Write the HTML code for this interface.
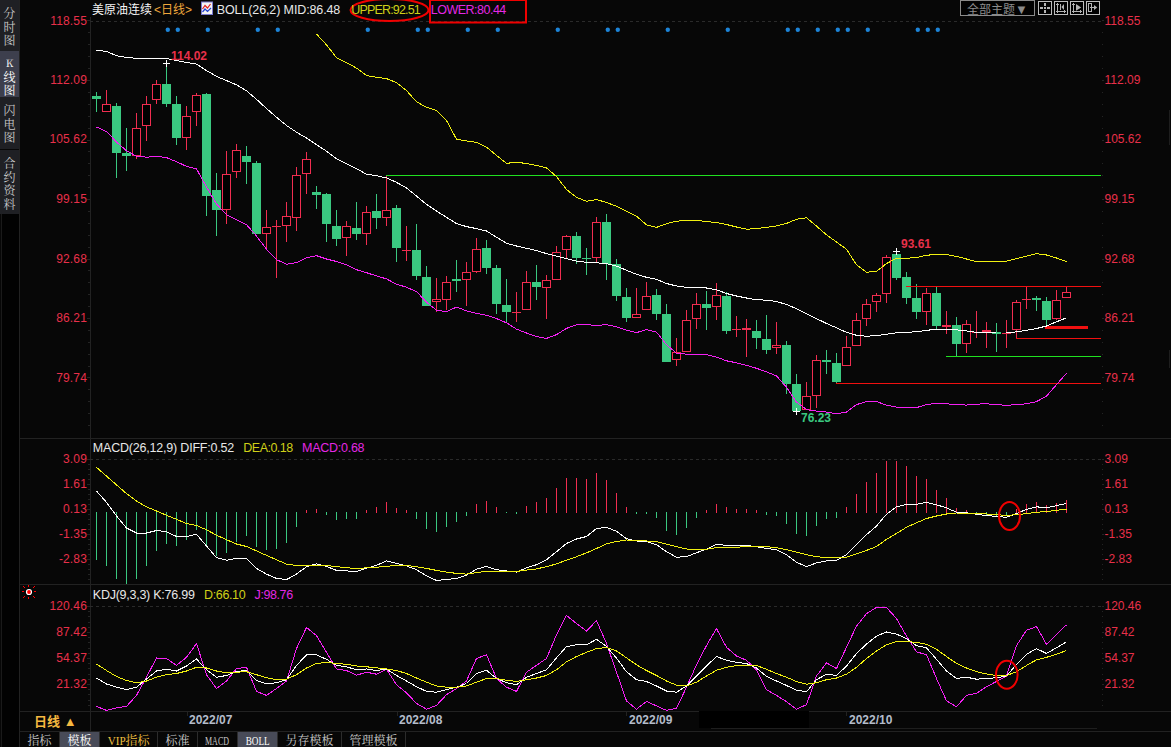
<!DOCTYPE html><html><head><meta charset="utf-8"><title>美原油连续 日线</title><style>
html,body{margin:0;padding:0;background:#070707;}
body{width:1171px;height:747px;position:relative;overflow:hidden;font-family:"Liberation Sans","Noto Sans CJK SC",sans-serif;}
.t{position:absolute;white-space:nowrap;line-height:1;}
.ax{font-size:12px;color:#e8304a;}
.axl{text-align:right;width:60px;left:27px;letter-spacing:0.15px}
.axr{left:1104.5px;}
.ttl{font-size:13px;color:#e8e8e8;letter-spacing:-0.2px}
.song{font-family:"Liberation Mono","Noto Serif CJK SC",serif;font-size:12px;}
.side{position:absolute;left:0;width:19px;text-align:center;color:#c8c8c8;font-size:12px;line-height:13.7px;font-family:"Noto Serif CJK SC",serif;background:#1f2024;}
.tab{position:absolute;top:732px;height:15px;line-height:15px;font-size:12px;color:#c8c8c8;text-align:center;border-right:1px solid #2c2c2c;box-sizing:border-box;font-family:"Noto Serif CJK SC",serif;}
.tab .en{font-family:"Liberation Serif",serif;font-size:12px;display:inline-block;transform-origin:50% 50%;}
.date{font-size:12px;font-weight:bold;color:#b4bccb;top:714px;}
.pk{font-size:12px;font-weight:bold;color:#e8304a;}
</style></head><body>
<svg width="1171" height="747" viewBox="0 0 1171 747" style="position:absolute;left:0;top:0"><g shape-rendering="crispEdges" stroke="#222222" stroke-width="1" fill="none"><path d="M19.5 0V747"/><path d="M90.5 17V731"/><path d="M20 438.5H1171M20 584.5H1171M20 711.5H1171M20 731.5H1171"/><path d="M1.5 214V747" stroke="#1a1a1a"/><rect x="2" y="214" width="17" height="533" fill="#020202" stroke="none"/><path d="M711 728.5H1097" stroke="#1e1e1e"/><path d="M1169.5 110V145M1169.5 350V368" stroke="#1e1e1e"/></g><g shape-rendering="crispEdges" stroke="#2a2a2a" stroke-width="1" stroke-dasharray="3 3" fill="none"><path d="M90 21.5H1101M90 459.5H1101M90 606.5H1101"/></g><path shape-rendering="crispEdges" stroke="#242424" stroke-width="1" d="M87 20.5H90M1102 20.5H1104M88 32.5H90M1102 32.5H1103M88 44.5H90M1102 44.5H1103M88 56.5H90M1102 56.5H1103M88 68.5H90M1102 68.5H1103M87 80.5H90M1102 80.5H1104M88 92.5H90M1102 92.5H1103M88 104.5H90M1102 104.5H1103M88 116.5H90M1102 116.5H1103M88 128.5H90M1102 128.5H1103M87 140.5H90M1102 140.5H1104M88 151.5H90M1102 151.5H1103M88 163.5H90M1102 163.5H1103M88 175.5H90M1102 175.5H1103M88 187.5H90M1102 187.5H1103M87 199.5H90M1102 199.5H1104M88 211.5H90M1102 211.5H1103M88 223.5H90M1102 223.5H1103M88 235.5H90M1102 235.5H1103M88 247.5H90M1102 247.5H1103M87 259.5H90M1102 259.5H1104M88 270.5H90M1102 270.5H1103M88 282.5H90M1102 282.5H1103M88 294.5H90M1102 294.5H1103M88 306.5H90M1102 306.5H1103M87 318.5H90M1102 318.5H1104M88 330.5H90M1102 330.5H1103M88 342.5H90M1102 342.5H1103M88 354.5H90M1102 354.5H1103M88 366.5H90M1102 366.5H1103M87 377.5H90M1102 377.5H1104M88 389.5H90M1102 389.5H1103M88 401.5H90M1102 401.5H1103M88 413.5H90M1102 413.5H1103M88 425.5H90M1102 425.5H1103M87 459.5H90M1102 459.5H1104M88 464.5H90M1102 464.5H1103M88 469.5H90M1102 469.5H1103M88 474.5H90M1102 474.5H1103M88 479.5H90M1102 479.5H1103M87 484.5H90M1102 484.5H1104M88 489.5H90M1102 489.5H1103M88 494.5H90M1102 494.5H1103M88 499.5H90M1102 499.5H1103M88 504.5H90M1102 504.5H1103M87 509.5H90M1102 509.5H1104M88 514.5H90M1102 514.5H1103M88 519.5H90M1102 519.5H1103M88 524.5H90M1102 524.5H1103M88 529.5H90M1102 529.5H1103M87 534.5H90M1102 534.5H1104M88 539.5H90M1102 539.5H1103M88 544.5H90M1102 544.5H1103M88 549.5H90M1102 549.5H1103M88 554.5H90M1102 554.5H1103M87 559.5H90M1102 559.5H1104M88 564.5H90M1102 564.5H1103M88 569.5H90M1102 569.5H1103M88 574.5H90M1102 574.5H1103M88 579.5H90M1102 579.5H1103M87 606.5H90M1102 606.5H1104M88 611.5H90M1102 611.5H1103M88 616.5H90M1102 616.5H1103M88 622.5H90M1102 622.5H1103M88 627.5H90M1102 627.5H1103M87 632.5H90M1102 632.5H1104M88 637.5H90M1102 637.5H1103M88 642.5H90M1102 642.5H1103M88 648.5H90M1102 648.5H1103M88 653.5H90M1102 653.5H1103M87 658.5H90M1102 658.5H1104M88 663.5H90M1102 663.5H1103M88 668.5H90M1102 668.5H1103M88 674.5H90M1102 674.5H1103M88 679.5H90M1102 679.5H1103M87 684.5H90M1102 684.5H1104M88 689.5H90M1102 689.5H1103M88 694.5H90M1102 694.5H1103M88 700.5H90M1102 700.5H1103M88 705.5H90M1102 705.5H1103"/><g shape-rendering="crispEdges"><path stroke="#3ac880" d="M96.5 92V112"/><rect x="92" y="96" width="9" height="3" fill="#3ac880"/><path stroke="#f02d50" d="M106.5 90V104M106.5 112V112"/><rect x="102.5" y="104.5" width="8" height="7" fill="#000" stroke="#f02d50"/><path stroke="#3ac880" d="M116.5 103V178"/><rect x="112" y="106" width="9" height="47" fill="#3ac880"/><path stroke="#3ac880" d="M126.5 128V171"/><rect x="122" y="153" width="9" height="3" fill="#3ac880"/><path stroke="#f02d50" d="M136.5 113V128M136.5 156V159"/><rect x="132.5" y="128.5" width="8" height="27" fill="#000" stroke="#f02d50"/><path stroke="#f02d50" d="M146.5 96V104M146.5 126V141"/><rect x="142.5" y="104.5" width="8" height="21" fill="#000" stroke="#f02d50"/><path stroke="#f02d50" d="M156.5 80V84M156.5 100V104"/><rect x="152.5" y="84.5" width="8" height="15" fill="#000" stroke="#f02d50"/><path stroke="#3ac880" d="M166.5 64V107"/><rect x="162" y="84" width="9" height="20" fill="#3ac880"/><path stroke="#3ac880" d="M176.5 96V145"/><rect x="172" y="104" width="9" height="34" fill="#3ac880"/><path stroke="#f02d50" d="M186.5 106V116M186.5 138V150"/><rect x="182.5" y="116.5" width="8" height="21" fill="#000" stroke="#f02d50"/><path stroke="#f02d50" d="M196.5 93V95M196.5 112V126"/><rect x="192.5" y="95.5" width="8" height="16" fill="#000" stroke="#f02d50"/><path stroke="#3ac880" d="M206.5 93V216"/><rect x="202" y="94" width="9" height="102" fill="#3ac880"/><path stroke="#3ac880" d="M216.5 173V236"/><rect x="212" y="190" width="9" height="20" fill="#3ac880"/><path stroke="#f02d50" d="M226.5 151V174M226.5 210V224"/><rect x="222.5" y="174.5" width="8" height="35" fill="#000" stroke="#f02d50"/><path stroke="#f02d50" d="M236.5 144V150M236.5 172V178"/><rect x="232.5" y="150.5" width="8" height="21" fill="#000" stroke="#f02d50"/><path stroke="#3ac880" d="M246.5 146V184"/><rect x="242" y="156" width="9" height="6" fill="#3ac880"/><path stroke="#3ac880" d="M256.5 161V234"/><rect x="252" y="163" width="9" height="71" fill="#3ac880"/><path stroke="#f02d50" d="M266.5 210V227M266.5 234V250"/><rect x="262.5" y="227.5" width="8" height="6" fill="#000" stroke="#f02d50"/><path stroke="#f02d50" d="M276.5 220V278"/><rect x="272" y="226" width="9" height="1" fill="#f02d50"/><path stroke="#f02d50" d="M286.5 202V216M286.5 226V242"/><rect x="282.5" y="216.5" width="8" height="9" fill="#000" stroke="#f02d50"/><path stroke="#f02d50" d="M296.5 167V175M296.5 218V231"/><rect x="292.5" y="175.5" width="8" height="42" fill="#000" stroke="#f02d50"/><path stroke="#f02d50" d="M306.5 152V159M306.5 174V194"/><rect x="302.5" y="159.5" width="8" height="14" fill="#000" stroke="#f02d50"/><path stroke="#3ac880" d="M316.5 186V209"/><rect x="312" y="192" width="9" height="3" fill="#3ac880"/><path stroke="#3ac880" d="M326.5 193V242"/><rect x="322" y="194" width="9" height="30" fill="#3ac880"/><path stroke="#3ac880" d="M336.5 210V246"/><rect x="332" y="226" width="9" height="13" fill="#3ac880"/><path stroke="#f02d50" d="M346.5 221V226M346.5 238V256"/><rect x="342.5" y="226.5" width="8" height="11" fill="#000" stroke="#f02d50"/><path stroke="#3ac880" d="M356.5 202V240"/><rect x="352" y="228" width="9" height="6" fill="#3ac880"/><path stroke="#f02d50" d="M366.5 206V212M366.5 234V245"/><rect x="362.5" y="212.5" width="8" height="21" fill="#000" stroke="#f02d50"/><path stroke="#3ac880" d="M376.5 194V229"/><rect x="372" y="211" width="9" height="7" fill="#3ac880"/><path stroke="#f02d50" d="M386.5 176V210M386.5 218V226"/><rect x="382.5" y="210.5" width="8" height="7" fill="#000" stroke="#f02d50"/><path stroke="#3ac880" d="M396.5 205V262"/><rect x="392" y="208" width="9" height="40" fill="#3ac880"/><path stroke="#f02d50" d="M406.5 226V261"/><rect x="402" y="250" width="9" height="1" fill="#f02d50"/><path stroke="#3ac880" d="M416.5 224V280"/><rect x="412" y="250" width="9" height="26" fill="#3ac880"/><path stroke="#3ac880" d="M426.5 266V306"/><rect x="422" y="277" width="9" height="29" fill="#3ac880"/><path stroke="#f02d50" d="M436.5 278V299M436.5 302V312"/><rect x="432.5" y="299.5" width="8" height="2" fill="#000" stroke="#f02d50"/><path stroke="#f02d50" d="M446.5 276V282M446.5 300V310"/><rect x="442.5" y="282.5" width="8" height="17" fill="#000" stroke="#f02d50"/><path stroke="#3ac880" d="M456.5 260V292"/><rect x="452" y="279" width="9" height="2" fill="#3ac880"/><path stroke="#f02d50" d="M466.5 262V272M466.5 280V306"/><rect x="462.5" y="272.5" width="8" height="7" fill="#000" stroke="#f02d50"/><path stroke="#f02d50" d="M476.5 238V249M476.5 272V273"/><rect x="472.5" y="249.5" width="8" height="22" fill="#000" stroke="#f02d50"/><path stroke="#3ac880" d="M486.5 240V274"/><rect x="482" y="248" width="9" height="20" fill="#3ac880"/><path stroke="#3ac880" d="M496.5 265V314"/><rect x="492" y="268" width="9" height="36" fill="#3ac880"/><path stroke="#3ac880" d="M506.5 279V322"/><rect x="502" y="305" width="9" height="7" fill="#3ac880"/><path stroke="#f02d50" d="M516.5 292V322"/><rect x="512" y="312" width="9" height="1" fill="#f02d50"/><path stroke="#f02d50" d="M526.5 271V282M526.5 310V310"/><rect x="522.5" y="282.5" width="8" height="27" fill="#000" stroke="#f02d50"/><path stroke="#3ac880" d="M536.5 265V300"/><rect x="532" y="282" width="9" height="5" fill="#3ac880"/><path stroke="#f02d50" d="M546.5 275V280M546.5 288V319"/><rect x="542.5" y="280.5" width="8" height="7" fill="#000" stroke="#f02d50"/><path stroke="#f02d50" d="M556.5 246V252M556.5 280V280"/><rect x="552.5" y="252.5" width="8" height="27" fill="#000" stroke="#f02d50"/><path stroke="#f02d50" d="M566.5 235V236M566.5 250V258"/><rect x="562.5" y="236.5" width="8" height="13" fill="#000" stroke="#f02d50"/><path stroke="#3ac880" d="M576.5 232V264"/><rect x="572" y="236" width="9" height="22" fill="#3ac880"/><path stroke="#3ac880" d="M586.5 248V275"/><rect x="582" y="258" width="9" height="1" fill="#3ac880"/><path stroke="#f02d50" d="M596.5 217V222M596.5 258V262"/><rect x="592.5" y="222.5" width="8" height="35" fill="#000" stroke="#f02d50"/><path stroke="#3ac880" d="M606.5 214V280"/><rect x="602" y="222" width="9" height="42" fill="#3ac880"/><path stroke="#3ac880" d="M616.5 259V301"/><rect x="612" y="264" width="9" height="32" fill="#3ac880"/><path stroke="#3ac880" d="M626.5 288V322"/><rect x="622" y="297" width="9" height="21" fill="#3ac880"/><path stroke="#f02d50" d="M636.5 288V314M636.5 318V318"/><rect x="632.5" y="314.5" width="8" height="3" fill="#000" stroke="#f02d50"/><path stroke="#f02d50" d="M646.5 282V296M646.5 310V310"/><rect x="642.5" y="296.5" width="8" height="13" fill="#000" stroke="#f02d50"/><path stroke="#3ac880" d="M656.5 289V320"/><rect x="652" y="295" width="9" height="19" fill="#3ac880"/><path stroke="#3ac880" d="M666.5 304V362"/><rect x="662" y="314" width="9" height="48" fill="#3ac880"/><path stroke="#f02d50" d="M676.5 338V352M676.5 360V366"/><rect x="672.5" y="352.5" width="8" height="7" fill="#000" stroke="#f02d50"/><path stroke="#f02d50" d="M686.5 310V320M686.5 352V352"/><rect x="682.5" y="320.5" width="8" height="31" fill="#000" stroke="#f02d50"/><path stroke="#f02d50" d="M696.5 293V304M696.5 319V329"/><rect x="692.5" y="304.5" width="8" height="14" fill="#000" stroke="#f02d50"/><path stroke="#3ac880" d="M706.5 291V330"/><rect x="702" y="304" width="9" height="4" fill="#3ac880"/><path stroke="#f02d50" d="M716.5 283V295M716.5 307V320"/><rect x="712.5" y="295.5" width="8" height="11" fill="#000" stroke="#f02d50"/><path stroke="#3ac880" d="M726.5 292V334"/><rect x="722" y="296" width="9" height="35" fill="#3ac880"/><path stroke="#f02d50" d="M736.5 316V337"/><rect x="732" y="329" width="9" height="1" fill="#f02d50"/><path stroke="#f02d50" d="M746.5 319V357"/><rect x="742" y="328" width="9" height="2" fill="#f02d50"/><path stroke="#3ac880" d="M756.5 320V349"/><rect x="752" y="331" width="9" height="7" fill="#3ac880"/><path stroke="#3ac880" d="M766.5 315V354"/><rect x="762" y="339" width="9" height="11" fill="#3ac880"/><path stroke="#f02d50" d="M776.5 322V345M776.5 348V354"/><rect x="772.5" y="345.5" width="8" height="2" fill="#000" stroke="#f02d50"/><path stroke="#3ac880" d="M786.5 341V394"/><rect x="782" y="345" width="9" height="39" fill="#3ac880"/><path stroke="#3ac880" d="M796.5 374V412"/><rect x="792" y="384" width="9" height="27" fill="#3ac880"/><path stroke="#f02d50" d="M806.5 382V396M806.5 410V410"/><rect x="802.5" y="396.5" width="8" height="13" fill="#000" stroke="#f02d50"/><path stroke="#f02d50" d="M816.5 355V360M816.5 396V408"/><rect x="812.5" y="360.5" width="8" height="35" fill="#000" stroke="#f02d50"/><path stroke="#3ac880" d="M826.5 350V374"/><rect x="822" y="360" width="9" height="2" fill="#3ac880"/><path stroke="#3ac880" d="M836.5 353V384"/><rect x="832" y="363" width="9" height="19" fill="#3ac880"/><path stroke="#f02d50" d="M846.5 336V347M846.5 366V366"/><rect x="842.5" y="347.5" width="8" height="18" fill="#000" stroke="#f02d50"/><path stroke="#f02d50" d="M856.5 313V320M856.5 346V346"/><rect x="852.5" y="320.5" width="8" height="25" fill="#000" stroke="#f02d50"/><path stroke="#f02d50" d="M866.5 299V304M866.5 319V326"/><rect x="862.5" y="304.5" width="8" height="14" fill="#000" stroke="#f02d50"/><path stroke="#f02d50" d="M876.5 293V295M876.5 302V312"/><rect x="872.5" y="295.5" width="8" height="6" fill="#000" stroke="#f02d50"/><path stroke="#f02d50" d="M886.5 255V257M886.5 294V303"/><rect x="882.5" y="257.5" width="8" height="36" fill="#000" stroke="#f02d50"/><path stroke="#3ac880" d="M896.5 251V280"/><rect x="892" y="254" width="9" height="24" fill="#3ac880"/><path stroke="#3ac880" d="M906.5 272V304"/><rect x="902" y="277" width="9" height="21" fill="#3ac880"/><path stroke="#3ac880" d="M916.5 284V319"/><rect x="912" y="298" width="9" height="14" fill="#3ac880"/><path stroke="#f02d50" d="M926.5 288V293M926.5 312V325"/><rect x="922.5" y="293.5" width="8" height="18" fill="#000" stroke="#f02d50"/><path stroke="#3ac880" d="M936.5 286V330"/><rect x="932" y="293" width="9" height="33" fill="#3ac880"/><path stroke="#f02d50" d="M946.5 311V334"/><rect x="942" y="325" width="9" height="2" fill="#f02d50"/><path stroke="#3ac880" d="M956.5 317V356"/><rect x="952" y="325" width="9" height="19" fill="#3ac880"/><path stroke="#f02d50" d="M966.5 320V324M966.5 344V353"/><rect x="962.5" y="324.5" width="8" height="19" fill="#000" stroke="#f02d50"/><path stroke="#f02d50" d="M976.5 311V338"/><rect x="972" y="332" width="9" height="1" fill="#f02d50"/><path stroke="#f02d50" d="M986.5 322V348"/><rect x="982" y="330" width="9" height="2" fill="#f02d50"/><path stroke="#3ac880" d="M996.5 323V352"/><rect x="992" y="332" width="9" height="2" fill="#3ac880"/><path stroke="#f02d50" d="M1006.5 320V348"/><rect x="1002" y="333" width="9" height="1" fill="#f02d50"/><path stroke="#f02d50" d="M1016.5 300V302M1016.5 330V338"/><rect x="1012.5" y="302.5" width="8" height="27" fill="#000" stroke="#f02d50"/><path stroke="#f02d50" d="M1026.5 287V309"/><rect x="1022" y="299" width="9" height="1" fill="#f02d50"/><path stroke="#3ac880" d="M1036.5 296V311"/><rect x="1032" y="298" width="9" height="2" fill="#3ac880"/><path stroke="#3ac880" d="M1046.5 297V325"/><rect x="1042" y="301" width="9" height="19" fill="#3ac880"/><path stroke="#f02d50" d="M1056.5 290V300M1056.5 319V320"/><rect x="1052.5" y="300.5" width="8" height="18" fill="#000" stroke="#f02d50"/><path stroke="#f02d50" d="M1066.5 286V292M1066.5 298V298"/><rect x="1062.5" y="292.5" width="8" height="5" fill="#000" stroke="#f02d50"/></g><g shape-rendering="crispEdges" fill="none"><path stroke="#20e020" stroke-width="1" d="M386 175.5H1101M946 356.5H1101"/><path stroke="#f01010" stroke-width="1" d="M906 286.5H1101M836 383.5H1101M1016 338.5H1101"/></g><path shape-rendering="crispEdges" stroke="#f01010" stroke-width="3" d="M1045 327.5H1088"/><polyline shape-rendering="crispEdges" fill="none" stroke="#f0f010" stroke-width="1" points="316.5,34 326.5,44.9 336.5,57.6 346.5,62.6 356.5,68.1 366.5,75.6 376.5,77.3 386.5,78.6 396.5,82.6 406.5,90.6 416.5,101.8 426.5,107.3 436.5,110.5 446.5,120.5 456.5,139.2 466.5,140.9 476.5,142.4 486.5,147.2 496.5,155.4 506.5,163.4 516.5,162.1 526.5,163.6 536.5,165.4 546.5,167.9 556.5,176.6 566.5,189.5 576.5,197.4 586.5,201.3 596.5,199.5 606.5,202.5 616.5,206.2 626.5,211.2 636.5,216.2 646.5,224.9 656.5,227.4 666.5,223.7 676.5,221.2 686.5,220.4 696.5,220.4 706.5,221.5 716.5,222.6 726.5,224.5 736.5,227 746.5,229.2 756.5,228.6 766.5,227.3 776.5,225.9 786.5,223.4 796.5,219.3 806.5,217.8 816.5,226.1 826.5,234.8 836.5,242 846.5,249.3 856.5,264.8 866.5,272.3 876.5,271.3 886.5,263.6 896.5,258.3 906.5,258.2 916.5,257.6 926.5,255.3 936.5,254.3 946.5,254.6 956.5,256.4 966.5,259 976.5,261.6 986.5,261.7 996.5,261.7 1006.5,261.2 1016.5,258.7 1026.5,256.2 1036.5,253.7 1046.5,255 1056.5,258 1066.5,261.7"/><polyline shape-rendering="crispEdges" fill="none" stroke="#ffffff" stroke-width="1" points="96.5,50.2 106.5,51.4 116.5,55.7 126.5,57.4 136.5,58.4 146.5,58.4 156.5,58.4 166.5,58.6 176.5,60.6 186.5,62.4 196.5,64.1 206.5,70.6 216.5,76.4 226.5,80.6 236.5,84.8 246.5,90.8 256.5,99.3 266.5,108.5 276.5,117.2 286.5,125.5 296.5,132.2 306.5,138 316.5,144.7 326.5,151.2 336.5,158.7 346.5,163.7 356.5,168.7 366.5,174.2 376.5,175.7 386.5,177.9 396.5,182.4 406.5,187.9 416.5,196.1 426.5,204.4 436.5,211.1 446.5,217.3 456.5,223.6 466.5,226.6 476.5,228.6 486.5,231 496.5,237.3 506.5,243.2 516.5,246 526.5,248.3 536.5,250.6 546.5,253.6 556.5,256.1 566.5,258.6 576.5,261.1 586.5,262.3 596.5,262.8 606.5,263.6 616.5,266.1 626.5,270.3 636.5,274.3 646.5,277.3 656.5,279.3 666.5,283.5 676.5,286 686.5,287.3 696.5,287.8 706.5,288 716.5,289.8 726.5,293.5 736.5,296 746.5,298 756.5,299.7 766.5,300.2 776.5,301.5 786.5,304.5 796.5,308.6 806.5,313.6 816.5,318.6 826.5,323.5 836.5,327.8 846.5,332.3 856.5,335.3 866.5,336.3 876.5,335.5 886.5,334.3 896.5,332.8 906.5,332.3 916.5,331.8 926.5,330.3 936.5,329.3 946.5,329.3 956.5,329.8 966.5,331 976.5,332.3 986.5,332.8 996.5,333 1006.5,333 1016.5,331.8 1026.5,330.3 1036.5,328.5 1046.5,326 1056.5,321.8 1066.5,317.8"/><polyline shape-rendering="crispEdges" fill="none" stroke="#f420f4" stroke-width="1" points="96.5,127 106.5,131.5 116.5,142 126.5,150.7 136.5,156.2 146.5,157.2 156.5,156.3 166.5,157.6 176.5,161.7 186.5,166.4 196.5,168.8 206.5,187 216.5,204 226.5,214.6 236.5,219.6 246.5,224.6 256.5,236 266.5,249.3 276.5,259.7 286.5,264.2 296.5,262.7 306.5,257.7 316.5,255.7 326.5,259 336.5,261.5 346.5,264.7 356.5,269.7 366.5,272.7 376.5,275.9 386.5,278.9 396.5,284.2 406.5,287.2 416.5,291.6 426.5,302.1 436.5,310.3 446.5,311.6 456.5,307.1 466.5,310.8 476.5,313.3 486.5,315.3 496.5,318.6 506.5,322.8 516.5,329.1 526.5,333 536.5,336.6 546.5,338.4 556.5,334.6 566.5,328.4 576.5,324.7 586.5,324.7 596.5,325.4 606.5,324.7 616.5,326.7 626.5,330.1 636.5,332.6 646.5,329.7 656.5,332.1 666.5,344.6 676.5,353.3 686.5,354.1 696.5,354.6 706.5,354.6 716.5,357.1 726.5,360.8 736.5,362.8 746.5,365.3 756.5,368.3 766.5,371.8 776.5,376 786.5,387.1 796.5,402.1 806.5,409.6 816.5,411.1 826.5,412.1 836.5,413.8 846.5,412.1 856.5,404.6 866.5,401.6 876.5,401.6 886.5,405.1 896.5,407.1 906.5,407.6 916.5,407.6 926.5,404.6 936.5,403.3 946.5,403.8 956.5,404.6 966.5,405.1 976.5,404.1 986.5,403.8 996.5,404.6 1006.5,405.3 1016.5,404.6 1026.5,403.8 1036.5,401.6 1046.5,396.2 1056.5,384.6 1066.5,373.4"/><g fill="#1c84d8"><circle cx="167.8" cy="29.8" r="2.2"/><circle cx="177.8" cy="29.8" r="2.2"/><circle cx="207.8" cy="29.8" r="2.2"/><circle cx="257.8" cy="29.8" r="2.2"/><circle cx="277.8" cy="29.8" r="2.2"/><circle cx="367.8" cy="29.8" r="2.2"/><circle cx="417.8" cy="29.8" r="2.2"/><circle cx="427.8" cy="29.8" r="2.2"/><circle cx="467.8" cy="29.8" r="2.2"/><circle cx="497.8" cy="29.8" r="2.2"/><circle cx="557.8" cy="29.8" r="2.2"/><circle cx="607.8" cy="29.8" r="2.2"/><circle cx="617.8" cy="29.8" r="2.2"/><circle cx="667.8" cy="29.8" r="2.2"/><circle cx="727.8" cy="29.8" r="2.2"/><circle cx="787.8" cy="29.8" r="2.2"/><circle cx="797.8" cy="29.8" r="2.2"/><circle cx="817.8" cy="29.8" r="2.2"/><circle cx="837.8" cy="29.8" r="2.2"/><circle cx="847.8" cy="29.8" r="2.2"/><circle cx="867.8" cy="29.8" r="2.2"/><circle cx="917.8" cy="29.8" r="2.2"/><circle cx="927.8" cy="29.8" r="2.2"/><circle cx="937.8" cy="29.8" r="2.2"/></g><path shape-rendering="crispEdges" stroke="#fff" d="M163 63.5H170M166.5 60V67M893 251.5H900M896.5 248V255M793 411.5H800M796.5 408V415"/><g shape-rendering="crispEdges"><path stroke="#3ac880" d="M96.5 512V560"/><path stroke="#3ac880" d="M106.5 512V566"/><path stroke="#3ac880" d="M116.5 512V579"/><path stroke="#3ac880" d="M126.5 512V584"/><path stroke="#3ac880" d="M136.5 512V579"/><path stroke="#3ac880" d="M146.5 512V566"/><path stroke="#3ac880" d="M156.5 512V551"/><path stroke="#3ac880" d="M166.5 512V544"/><path stroke="#3ac880" d="M176.5 512V546"/><path stroke="#3ac880" d="M186.5 512V540"/><path stroke="#3ac880" d="M196.5 512V530"/><path stroke="#3ac880" d="M206.5 512V546"/><path stroke="#3ac880" d="M216.5 512V556"/><path stroke="#3ac880" d="M226.5 512V553"/><path stroke="#3ac880" d="M236.5 512V542"/><path stroke="#3ac880" d="M246.5 512V536"/><path stroke="#3ac880" d="M256.5 512V547"/><path stroke="#3ac880" d="M266.5 512V550"/><path stroke="#3ac880" d="M276.5 512V549"/><path stroke="#3ac880" d="M286.5 512V543"/><path stroke="#3ac880" d="M296.5 512V527"/><path stroke="#f02d50" d="M306.5 510V513"/><path stroke="#f02d50" d="M316.5 509V513"/><path stroke="#3ac880" d="M326.5 512V515"/><path stroke="#3ac880" d="M336.5 512V520"/><path stroke="#3ac880" d="M346.5 512V519"/><path stroke="#3ac880" d="M356.5 512V519"/><path stroke="#f02d50" d="M366.5 510V513"/><path stroke="#f02d50" d="M376.5 507V513"/><path stroke="#f02d50" d="M386.5 502V513"/><path stroke="#f02d50" d="M396.5 508V513"/><path stroke="#f02d50" d="M406.5 510V513"/><path stroke="#3ac880" d="M416.5 512V519"/><path stroke="#3ac880" d="M426.5 512V529"/><path stroke="#3ac880" d="M436.5 512V532"/><path stroke="#3ac880" d="M446.5 512V527"/><path stroke="#3ac880" d="M456.5 512V522"/><path stroke="#3ac880" d="M466.5 512V516"/><path stroke="#f02d50" d="M476.5 504V513"/><path stroke="#f02d50" d="M486.5 501V513"/><path stroke="#f02d50" d="M496.5 507V513"/><path stroke="#3ac880" d="M506.5 512V513"/><path stroke="#3ac880" d="M516.5 512V514"/><path stroke="#f02d50" d="M526.5 506V513"/><path stroke="#f02d50" d="M536.5 502V513"/><path stroke="#f02d50" d="M546.5 498V513"/><path stroke="#f02d50" d="M556.5 488V513"/><path stroke="#f02d50" d="M566.5 478V513"/><path stroke="#f02d50" d="M576.5 478V513"/><path stroke="#f02d50" d="M586.5 479V513"/><path stroke="#f02d50" d="M596.5 473V513"/><path stroke="#f02d50" d="M606.5 480V513"/><path stroke="#f02d50" d="M616.5 493V513"/><path stroke="#f02d50" d="M626.5 507V513"/><path stroke="#3ac880" d="M636.5 512V514"/><path stroke="#3ac880" d="M646.5 512V514"/><path stroke="#3ac880" d="M656.5 512V518"/><path stroke="#3ac880" d="M666.5 512V531"/><path stroke="#3ac880" d="M676.5 512V535"/><path stroke="#3ac880" d="M686.5 512V528"/><path stroke="#3ac880" d="M696.5 512V518"/><path stroke="#f02d50" d="M706.5 510V513"/><path stroke="#f02d50" d="M716.5 504V513"/><path stroke="#f02d50" d="M726.5 507V513"/><path stroke="#f02d50" d="M736.5 509V513"/><path stroke="#f02d50" d="M746.5 509V513"/><path stroke="#f02d50" d="M756.5 510V513"/><path stroke="#3ac880" d="M766.5 512V515"/><path stroke="#3ac880" d="M776.5 512V516"/><path stroke="#3ac880" d="M786.5 512V524"/><path stroke="#3ac880" d="M796.5 512V534"/><path stroke="#3ac880" d="M806.5 512V536"/><path stroke="#3ac880" d="M816.5 512V526"/><path stroke="#3ac880" d="M826.5 512V519"/><path stroke="#3ac880" d="M836.5 512V518"/><path stroke="#f02d50" d="M846.5 507V513"/><path stroke="#f02d50" d="M856.5 494V513"/><path stroke="#f02d50" d="M866.5 482V513"/><path stroke="#f02d50" d="M876.5 473V513"/><path stroke="#f02d50" d="M886.5 461V513"/><path stroke="#f02d50" d="M896.5 461V513"/><path stroke="#f02d50" d="M906.5 466V513"/><path stroke="#f02d50" d="M916.5 476V513"/><path stroke="#f02d50" d="M926.5 479V513"/><path stroke="#f02d50" d="M936.5 490V513"/><path stroke="#f02d50" d="M946.5 498V513"/><path stroke="#f02d50" d="M956.5 508V513"/><path stroke="#f02d50" d="M966.5 510V513"/><path stroke="#3ac880" d="M976.5 512V514"/><path stroke="#3ac880" d="M986.5 512V515"/><path stroke="#3ac880" d="M996.5 512V516"/><path stroke="#3ac880" d="M1006.5 512V516"/><path stroke="#f02d50" d="M1016.5 509V513"/><path stroke="#f02d50" d="M1026.5 504V513"/><path stroke="#f02d50" d="M1036.5 502V513"/><path stroke="#f02d50" d="M1046.5 505V513"/><path stroke="#f02d50" d="M1056.5 503V513"/><path stroke="#f02d50" d="M1066.5 500V513"/></g><polyline shape-rendering="crispEdges" fill="none" stroke="#ffffff" stroke-width="1" points="96.5,491.1 106.5,502.3 116.5,516 126.5,528 136.5,533 146.5,533 156.5,530.5 166.5,531.7 176.5,536.5 186.5,536.5 196.5,534.2 206.5,546 216.5,557.7 226.5,560.2 236.5,558.4 246.5,558.4 256.5,568.4 266.5,574.1 276.5,578.4 286.5,579.6 296.5,574.1 306.5,566.7 316.5,563.9 326.5,566.4 336.5,570.4 346.5,570.9 356.5,571.6 366.5,568.2 376.5,565.4 386.5,560.9 396.5,563.4 406.5,565.9 416.5,569.7 426.5,575.9 436.5,580.4 446.5,579.6 456.5,578.4 466.5,575.1 476.5,569.2 486.5,566.4 496.5,569.7 506.5,570.9 516.5,572.1 526.5,567.9 536.5,564.7 546.5,559.7 556.5,551.7 566.5,543.5 576.5,539 586.5,536.5 596.5,528.5 606.5,527.3 616.5,531.3 626.5,538.7 636.5,541 646.5,541.5 656.5,544.7 666.5,551.7 676.5,557.2 686.5,556.7 696.5,552.7 706.5,549.2 716.5,544.2 726.5,545.5 736.5,545.5 746.5,545.5 756.5,546.7 766.5,548.5 776.5,549.7 786.5,554.7 796.5,562.2 806.5,566.7 816.5,562.9 826.5,560.9 836.5,560.4 846.5,554.7 856.5,544.7 866.5,534.7 876.5,526 886.5,514.2 896.5,506.8 906.5,504.3 916.5,504.3 926.5,502.3 936.5,504.8 946.5,507.8 956.5,512.3 966.5,512.8 976.5,514.3 986.5,515.5 996.5,516.5 1006.5,517.3 1016.5,513.5 1026.5,509.3 1036.5,506.8 1046.5,507.8 1056.5,505.6 1066.5,503.6"/><polyline shape-rendering="crispEdges" fill="none" stroke="#f0f010" stroke-width="1" points="96.5,467.4 106.5,476.1 116.5,484.9 126.5,493.6 136.5,501.1 146.5,506.8 156.5,511 166.5,515.3 176.5,519.3 186.5,523.5 196.5,525.5 206.5,529.8 216.5,535.2 226.5,539.7 236.5,544 246.5,546.5 256.5,550.9 266.5,555.4 276.5,559.7 286.5,564.2 296.5,565.4 306.5,565.7 316.5,565.2 326.5,565.4 336.5,566.7 346.5,567.7 356.5,568.5 366.5,567.8 376.5,567.2 386.5,566.4 396.5,565.4 406.5,565.4 416.5,566.7 426.5,568.4 436.5,570.4 446.5,572.1 456.5,573.4 466.5,574.1 476.5,572.6 486.5,571.4 496.5,571.4 506.5,571.4 516.5,571.4 526.5,570.1 536.5,568.9 546.5,566.7 556.5,563.9 566.5,560.2 576.5,556.7 586.5,552.9 596.5,548.5 606.5,543.8 616.5,541.5 626.5,540 636.5,540.5 646.5,541 656.5,541.7 666.5,544.2 676.5,546.7 686.5,549 696.5,549.7 706.5,549.2 716.5,547.7 726.5,547.2 736.5,547.2 746.5,546.7 756.5,546.5 766.5,546.7 776.5,547.7 786.5,549.7 796.5,552.2 806.5,554.7 816.5,556.7 826.5,557.7 836.5,557.7 846.5,557.2 856.5,553.9 866.5,550.4 876.5,546.5 886.5,539.4 896.5,533.5 906.5,527.3 916.5,522.8 926.5,518.5 936.5,516 946.5,514 956.5,513 966.5,513 976.5,513.5 986.5,514 996.5,514.8 1006.5,515.3 1016.5,514.8 1026.5,513.5 1036.5,512.3 1046.5,511.5 1056.5,510.3 1066.5,509.1"/><polyline shape-rendering="crispEdges" fill="none" stroke="#f420f4" stroke-width="1" points="96.5,706.4 106.5,710.4 116.5,707.9 126.5,706.4 136.5,695.4 146.5,677.2 156.5,658 166.5,658.5 176.5,665.3 186.5,657.3 196.5,643.6 206.5,674.7 216.5,688.5 226.5,681 236.5,668.5 246.5,667.3 256.5,691.4 266.5,695.4 276.5,688.5 286.5,681 296.5,648.6 306.5,627.4 316.5,635.6 326.5,652.3 336.5,669 346.5,670.5 356.5,675.2 366.5,672.2 376.5,674.2 386.5,669.3 396.5,684.7 406.5,692.9 416.5,703.4 426.5,709.2 436.5,705.4 446.5,694.7 456.5,688.5 466.5,681 476.5,658.5 486.5,654.8 496.5,678.5 506.5,687.2 516.5,691.4 526.5,672.2 536.5,665.3 546.5,658.5 556.5,634.8 566.5,615.4 576.5,623.6 586.5,631.1 596.5,620.6 606.5,643.5 616.5,672.2 626.5,700.9 636.5,709.2 646.5,701.4 656.5,705.9 666.5,710.4 676.5,708.4 686.5,687.2 696.5,664.8 706.5,645.6 716.5,628.6 726.5,647.3 736.5,656 746.5,660.3 756.5,669.8 766.5,689.7 776.5,695.4 786.5,701.7 796.5,709.2 806.5,704.7 816.5,676 826.5,662.8 836.5,668.5 846.5,647.3 856.5,626.1 866.5,613.6 876.5,607.4 886.5,607.4 896.5,618.6 906.5,636.1 916.5,651.8 926.5,654.8 936.5,678.5 946.5,700.9 956.5,706.7 966.5,695.4 976.5,693.4 986.5,686.7 996.5,681.5 1006.5,676 1016.5,645.6 1026.5,630.3 1036.5,626.6 1046.5,644.3 1056.5,634.3 1066.5,624.9"/><polyline shape-rendering="crispEdges" fill="none" stroke="#ffffff" stroke-width="1" points="96.5,678 106.5,684 116.5,687.2 126.5,689.7 136.5,687.2 146.5,679 156.5,671 166.5,669.3 176.5,671 186.5,666 196.5,659 206.5,669.8 216.5,677.2 226.5,675.5 236.5,671.5 246.5,670.5 256.5,680.5 266.5,684 276.5,682.7 286.5,679.7 296.5,665.5 306.5,654.8 316.5,654.8 326.5,659.3 336.5,665.3 346.5,666.8 356.5,669.8 366.5,669 376.5,670.5 386.5,669 396.5,675.5 406.5,681 416.5,686.7 426.5,691.4 436.5,692.2 446.5,689.7 456.5,687.2 466.5,683.5 476.5,673.5 486.5,670.2 496.5,678.5 506.5,682.7 516.5,684.7 526.5,677.2 536.5,673.5 546.5,669.8 556.5,657.8 566.5,646.6 576.5,644.8 586.5,644.8 596.5,639.3 606.5,646.4 616.5,658.2 626.5,671.7 636.5,679.7 646.5,681.5 656.5,686 666.5,691 676.5,692.2 686.5,686 696.5,676 706.5,666 716.5,656.5 726.5,660.3 736.5,662.3 746.5,663.5 756.5,668 766.5,676.5 776.5,681 786.5,685.5 796.5,690.2 806.5,691.7 816.5,679.7 826.5,674.2 836.5,675.5 846.5,666 856.5,653.5 866.5,644.1 876.5,636.1 886.5,632 896.5,634.1 906.5,638.6 916.5,645.6 926.5,647.8 936.5,659.3 946.5,671 956.5,678.5 966.5,677.2 976.5,679.2 986.5,678.5 996.5,677.7 1006.5,676 1016.5,664.3 1026.5,654.3 1036.5,648.6 1046.5,653.5 1056.5,647.8 1066.5,641.8"/><polyline shape-rendering="crispEdges" fill="none" stroke="#f0f010" stroke-width="1" points="96.5,664 106.5,670.5 116.5,676.5 126.5,680.5 136.5,682.7 146.5,681 156.5,677.2 166.5,674.7 176.5,673.5 186.5,671 196.5,667.3 206.5,668 216.5,671 226.5,672.7 236.5,672.2 246.5,671.7 256.5,674.7 266.5,677.7 276.5,679.7 286.5,679.2 296.5,674.7 306.5,668 316.5,663.5 326.5,662.3 336.5,663.5 346.5,664.3 356.5,666 366.5,666.8 376.5,667.8 386.5,669 396.5,670.5 406.5,673.5 416.5,678 426.5,682.2 436.5,686 446.5,687.2 456.5,687.2 466.5,686 476.5,682.2 486.5,678.5 496.5,678.5 506.5,680.2 516.5,681.5 526.5,679.7 536.5,678 546.5,675.5 556.5,669.8 566.5,661.8 576.5,656.5 586.5,652.3 596.5,648.6 606.5,647.5 616.5,651 626.5,657.8 636.5,664.8 646.5,670.5 656.5,675.5 666.5,681 676.5,685.2 686.5,686 696.5,682.2 706.5,676 716.5,670.2 726.5,667.3 736.5,665.5 746.5,665.3 756.5,665.5 766.5,669.3 776.5,673.5 786.5,677.2 796.5,681.5 806.5,684.2 816.5,682.7 826.5,679.7 836.5,678 846.5,674.2 856.5,667.3 866.5,658.5 876.5,651 886.5,644.8 896.5,641.6 906.5,641.6 916.5,642.3 926.5,644.3 936.5,649.3 946.5,656.5 956.5,663.5 966.5,668 976.5,671.7 986.5,674 996.5,675.5 1006.5,675.5 1016.5,671.7 1026.5,665.5 1036.5,659.8 1046.5,657.3 1056.5,654.3 1066.5,650.5"/><g fill="none" stroke="#f00000" stroke-width="2"><ellipse cx="389.5" cy="10" rx="39" ry="11"/><rect x="430" y="0" width="96" height="22.5"/><ellipse cx="1009.5" cy="516" rx="10.5" ry="14"/><ellipse cx="1006.8" cy="674.7" rx="10.8" ry="14"/></g><rect x="699" y="711" width="110" height="17" fill="#000"/><path shape-rendering="crispEdges" stroke="#222222" d="M187.5 712V716M397.5 712V716M626.5 712V716M846.5 712V716"/><g shape-rendering="crispEdges" fill="#ff0000"><rect x="28" y="585" width="1" height="2"/><rect x="28" y="597" width="1" height="2"/><rect x="22" y="591" width="2" height="1"/><rect x="34" y="591" width="2" height="1"/><rect x="23" y="586" width="1" height="1"/><rect x="24" y="587" width="1" height="1"/><rect x="34" y="586" width="1" height="1"/><rect x="33" y="587" width="1" height="1"/><rect x="24" y="596" width="1" height="1"/><rect x="23" y="597" width="1" height="1"/><rect x="33" y="596" width="1" height="1"/><rect x="34" y="597" width="1" height="1"/></g><circle cx="29" cy="592" r="4" fill="#000"/><circle cx="29" cy="592" r="3.1" fill="#fff"/><circle cx="29" cy="592" r="1.9" fill="#ff0000"/><g><rect x="201.5" y="2" width="11" height="12.5" fill="#f4f4f4" stroke="#7a7ad0" stroke-width="1"/><polyline fill="none" stroke="#e02020" stroke-width="1.2" points="202.5,9 205,5.5 207.5,8 210.5,4"/><polyline fill="none" stroke="#2040d0" stroke-width="1.2" points="202.5,12 205,9 207.5,11.5 211,8"/></g><g shape-rendering="crispEdges" fill="#000" stroke="#bcbcbc"><rect x="1038.5" y="1.5" width="13" height="13"/><rect x="1054.5" y="1.5" width="13" height="13"/><rect x="1070.5" y="1.5" width="13" height="13"/><rect x="1086.5" y="1.5" width="13" height="13"/></g><g fill="#b4b4b4" stroke="none" shape-rendering="crispEdges"><rect x="1044" y="3" width="2" height="3"/><rect x="1044" y="10" width="2" height="3"/><rect x="1040" y="7" width="3" height="2"/><rect x="1047" y="7" width="3" height="2"/><rect x="1044" y="7" width="2" height="2"/><rect x="1057" y="3" width="1" height="10"/><rect x="1056" y="4" width="3" height="1"/><rect x="1056" y="11" width="10" height="1"/><rect x="1064" y="10" width="1" height="3"/><rect x="1060" y="4" width="1" height="6"/><rect x="1073" y="3" width="1" height="10"/><rect x="1072" y="4" width="3" height="1"/><rect x="1072" y="11" width="10" height="1"/><rect x="1080" y="10" width="1" height="3"/><rect x="1088" y="3" width="4" height="1"/><rect x="1088" y="11" width="4" height="1"/><rect x="1088" y="3" width="1" height="9"/><rect x="1091" y="3" width="1" height="9"/><rect x="1090" y="7" width="6" height="1"/></g><g fill="#b4b4b4" stroke="none"><path d="M1064 4v6l-2.6-3z"/><path d="M1076 4v6.8l5.2-3.4z"/><path d="M1094 5v5l3.2-2.5z"/></g></svg>
<div class="side" style="top:0;height:51px;padding-top:6px;box-sizing:border-box">分<br>时<br>图</div>
<div class="side" style="top:51px;height:46px;padding-top:4px;box-sizing:border-box;background:#3d3f4d;color:#fff"><span style="font-size:10.5px">K</span><br>线<br>图</div>
<div class="side" style="top:97px;height:52px;padding-top:6px;box-sizing:border-box">闪<br>电<br>图</div>
<div class="side" style="top:150px;height:64px;padding-top:6px;box-sizing:border-box">合<br>约<br>资<br>料</div>
<div class="t" style="left:92px;top:4px;font-size:12px;color:#f4f4f4">美原油连续<span style="color:#f0a83c;margin-left:2px">&lt;日线&gt;</span></div>
<div class="t" style="left:216.8px;top:3.5px;font-size:12.5px;color:#e8e8e8;letter-spacing:-0.118px">BOLL(26,2) MID:86.48</div>
<div class="t" style="left:351.2px;top:3.5px;font-size:12.5px;color:#d0d018;letter-spacing:-0.821px">UPPER:92.51</div>
<div class="t" style="left:430.8px;top:3.5px;font-size:12.5px;color:#e428e4;letter-spacing:-0.509px">LOWER:80.44</div>
<div class="t" style="left:92.8px;top:441.5px;font-size:12.5px;color:#e8e8e8;letter-spacing:-0.200px">MACD(26,12,9) DIFF:0.52</div>
<div class="t" style="left:243.3px;top:441.5px;font-size:12.5px;color:#d0d018;letter-spacing:-0.514px">DEA:0.18</div>
<div class="t" style="left:302px;top:441.5px;font-size:12.5px;color:#e428e4;letter-spacing:-0.257px">MACD:0.68</div>
<div class="t" style="left:92.8px;top:588.5px;font-size:12.5px;color:#e8e8e8;letter-spacing:-0.251px">KDJ(9,3,3) K:76.99</div>
<div class="t" style="left:204px;top:588.5px;font-size:12.5px;color:#d0d018;letter-spacing:-0.354px">D:66.10</div>
<div class="t" style="left:254.6px;top:588.5px;font-size:12.5px;color:#e428e4;letter-spacing:-0.417px">J:98.76</div>
<div class="t" style="left:960px;top:0;width:75px;height:16px;border:1px solid #8a8a8a;box-sizing:border-box;font-size:12px;color:#8c8c8c;line-height:16px;padding-left:6px;padding-top:.5px;background:#020202">全部主题<span style="font-size:13px;letter-spacing:-2px">▼</span></div>
<div class="t ax axl" style="top:14.7px">118.55</div><div class="t ax axr" style="top:14.7px">118.55</div>
<div class="t ax axl" style="top:73.7px">112.09</div><div class="t ax axr" style="top:73.7px">112.09</div>
<div class="t ax axl" style="top:133.2px">105.62</div><div class="t ax axr" style="top:133.2px">105.62</div>
<div class="t ax axl" style="top:192.7px">99.15</div><div class="t ax axr" style="top:192.7px">99.15</div>
<div class="t ax axl" style="top:252.7px">92.68</div><div class="t ax axr" style="top:252.7px">92.68</div>
<div class="t ax axl" style="top:312.2px">86.21</div><div class="t ax axr" style="top:312.2px">86.21</div>
<div class="t ax axl" style="top:371.7px">79.74</div><div class="t ax axr" style="top:371.7px">79.74</div>
<div class="t ax axl" style="top:453px">3.09</div><div class="t ax axr" style="top:453px">3.09</div>
<div class="t ax axl" style="top:478px">1.61</div><div class="t ax axr" style="top:478px">1.61</div>
<div class="t ax axl" style="top:503px">0.13</div><div class="t ax axr" style="top:503px">0.13</div>
<div class="t ax axl" style="top:528px">-1.35</div><div class="t ax axr" style="top:528px">-1.35</div>
<div class="t ax axl" style="top:553px">-2.83</div><div class="t ax axr" style="top:553px">-2.83</div>
<div class="t ax axl" style="top:600px">120.46</div><div class="t ax axr" style="top:600px">120.46</div>
<div class="t ax axl" style="top:626px">87.42</div><div class="t ax axr" style="top:626px">87.42</div>
<div class="t ax axl" style="top:652px">54.37</div><div class="t ax axr" style="top:652px">54.37</div>
<div class="t ax axl" style="top:678px">21.32</div><div class="t ax axr" style="top:678px">21.32</div>
<div class="t pk" style="left:171px;top:50px">114.02</div>
<div class="t pk" style="left:901px;top:238px">93.61</div>
<div class="t pk" style="left:801px;top:412px;color:#3ac880">76.23</div>
<div class="t date" style="left:189px">2022/07</div>
<div class="t date" style="left:399px">2022/08</div>
<div class="t date" style="left:629px">2022/09</div>
<div class="t date" style="left:849px">2022/10</div>
<div class="t" style="left:34px;top:715px;font-size:13px;font-weight:bold;color:#f5b840">日线 <span style="font-size:13px">▲</span></div>
<div class="tab" style="left:20px;width:40px;">指标</div>
<div class="tab" style="left:60px;width:40px;background:#484b58;color:#fff">模板</div>
<div class="tab" style="left:100px;width:58px;color:#f0c040"><span class="en" style="transform:scaleX(0.931);margin:0 -0.67px">VIP</span>指标</div>
<div class="tab" style="left:158px;width:40px;">标准</div>
<div class="tab" style="left:198px;width:40px;"><span class="en" style="transform:scaleX(0.666);margin:0 -6.01px">MACD</span></div>
<div class="tab" style="left:238px;width:40px;background:#484b58;color:#fff"><span class="en" style="transform:scaleX(0.766);margin:0 -3.67px">BOLL</span></div>
<div class="tab" style="left:278px;width:64px;">另存模板</div>
<div class="tab" style="left:342px;width:64px;">管理模板</div>
</body></html>
